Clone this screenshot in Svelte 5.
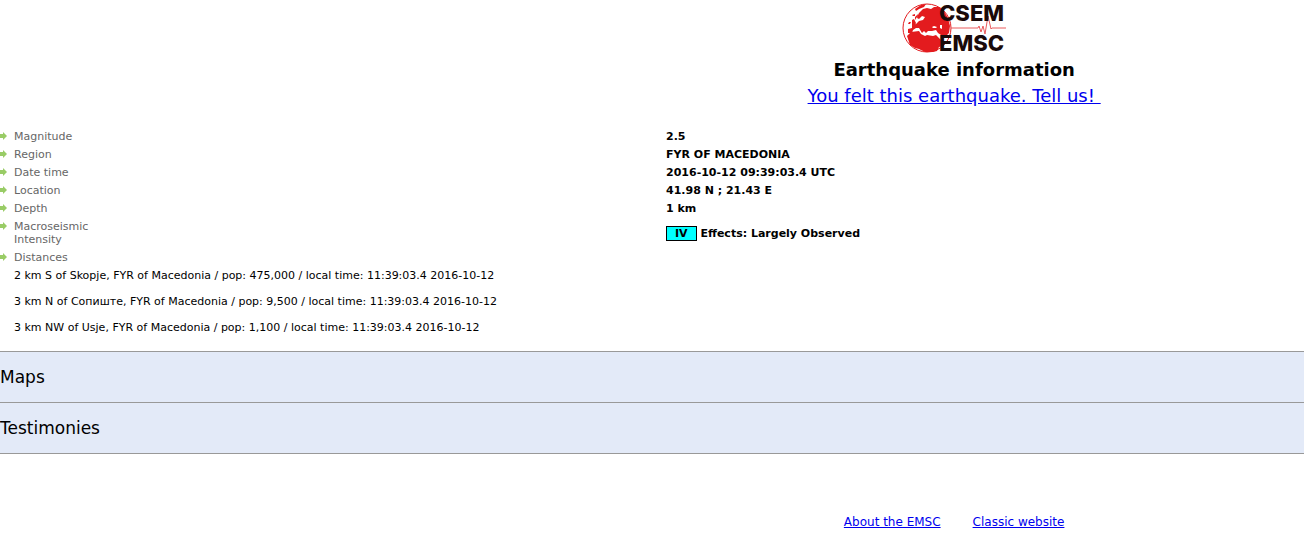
<script lang="ts">
  const details = [
    { label: 'Magnitude', value: '2.5' },
    { label: 'Region', value: 'FYR OF MACEDONIA' },
    { label: 'Date time', value: '2016-10-12 09:39:03.4 UTC' },
    { label: 'Location', value: '41.98 N ; 21.43 E' },
    { label: 'Depth', value: '1 km' },
    { label: 'Macroseismic Intensity', intensity: 'IV', value: 'Effects: Largely Observed' },
  ];

  const distances = [
    '2 km S of Skopje, FYR of Macedonia / pop: 475,000 / local time: 11:39:03.4 2016-10-12',
    '3 km N of Сопиште, FYR of Macedonia / pop: 9,500 / local time: 11:39:03.4 2016-10-12',
    '3 km NW of Usje, FYR of Macedonia / pop: 1,100 / local time: 11:39:03.4 2016-10-12',
  ];

  const sections = ['Maps', 'Testimonies'];
</script>

{#snippet label(text: string)}
  <span class="label">
    <svg class="arrow" viewBox="0 0 7 8" width="7" height="8" aria-hidden="true">
      <path d="M0 2h3V0l4 4-4 4V6H0z" />
    </svg>
    <span class="label-text">{text}</span>
  </span>
{/snippet}

<header class="centered">
  <div class="inner">
    <svg class="logo" viewBox="0 0 106 56" width="106" height="56" role="img" aria-label="CSEM EMSC">
      <circle cx="26" cy="28" r="24" fill="#fff" stroke="#e31b1e" />
      <g fill="#e31b1e">
        <!-- Greenland, Iceland -->
        <path d="M14 9l6-4 5-1-2 3-5 2-3 2zM11 15l3-1 0 2-2 0z" />
        <!-- British Isles -->
        <path d="M11 20l2-1 2 4-1 2-3 0zM8 22l2 0-1 2-2 0z" />
        <!-- Europe and Asia -->
        <path d="M16 17l2-4 4-4 4-1 4 1 3-2 5 0 5 4 4 7 2 8-1 7-3 3-5-1-3-2-2-3-4 1-4 0-2 2-2-2-2 2-3-5-3 0-3 2-1 3-4 0 0-4 4-1 0-3 4-1 3-3 4-1 2-3-3-1-3 3-2-1 1-4-3 3 0 3z" />
        <!-- Africa and Arabia -->
        <path d="M6 36l4-4 8-1 2 3 4 2 2-1 6 1 3-1 5 5 4 3-2 3-4 1-2 4-4 1-8 0-6-3-4-1-5-3z" />
      </g>
      <path d="M31 27l2-1 3 1-1 1-3 0zM39 25l2 0 0 4-2-1z" fill="#fff" />
      <path
        d="M50 28h27l1-2 2 6 2-6 2 8 3-18 3 13 1-1h14"
        fill="none"
        stroke="#ea5a5c"
      />
      <text x="38" y="21">CSEM</text>
      <text x="38" y="51">EMSC</text>
    </svg>
    <h1>Earthquake information</h1>
    <a class="felt" href="#testify">You felt this earthquake. Tell us!&nbsp;</a>
  </div>
</header>

<main>
  <table>
    <tbody>
      {#each details as row}
        <tr>
          <th scope="row">{@render label(row.label)}</th>
          <td>
            {#if row.intensity}<span class="intensity">{row.intensity}</span>{/if}
            {row.value}
          </td>
        </tr>
      {/each}
      <tr>
        <th scope="row">{@render label('Distances')}</th>
        <td></td>
      </tr>
    </tbody>
  </table>

  <ul class="distances">
    {#each distances as distance}
      <li>{distance}</li>
    {/each}
  </ul>

  <div class="sections">
    {#each sections as section}
      <button type="button">{section}</button>
    {/each}
  </div>
</main>

<footer class="centered">
  <nav class="inner">
    <a href="#about">About the EMSC</a>
    <a href="#classic">Classic website</a>
  </nav>
</footer>

<style>
  :global(body) {
    background: #fff;
    color: #000;
    font-family: Verdana, 'DejaVu Sans', sans-serif;
    font-size: 11px;
    line-height: 13px;
  }

  a {
    color: #00e;
  }

  .centered {
    display: grid;
    grid-template-columns: 19fr 22fr;
  }

  .inner {
    grid-column: 2;
  }

  header .inner {
    display: flex;
    flex-direction: column;
    align-items: center;
  }

  .logo {
    overflow: visible;
  }

  .logo text {
    font-family: Inter, sans-serif;
    font-size: 22px;
    font-weight: 800;
    fill: #1a0a0a;
  }

  h1 {
    margin: 3px 0;
    font-size: 18px;
    line-height: 22px;
  }

  .felt {
    font-size: 18px;
    line-height: 24px;
  }

  table {
    width: 100%;
    margin-top: 20px;
    border-collapse: collapse;
  }

  th,
  td {
    padding: 2px 0 3px;
    text-align: left;
  }

  th {
    width: 51%;
    color: #666;
    font-weight: normal;
  }

  td {
    padding-left: 1px;
    font-weight: bold;
  }

  .label {
    display: flex;
    gap: 7px;
  }

  .label-text {
    width: 80px;
  }

  .arrow {
    margin-top: 2px;
    fill: #9c6;
  }

  .intensity {
    display: inline-block;
    padding: 0 8px;
    border: 1px solid #000;
    background: #0ff;
  }

  .distances {
    display: grid;
    gap: 13px;
    margin: 2px 0 17px;
    padding: 0 0 0 14px;
    list-style: none;
  }

  .sections {
    border-top: 1px solid #999;
  }

  button {
    display: block;
    width: 100%;
    padding: 14px 0;
    border: 0;
    border-bottom: 1px solid #999;
    background: #e3eaf8;
    color: inherit;
    font-family: inherit;
    font-size: 17px;
    line-height: 22px;
    text-align: left;
  }

  nav {
    display: flex;
    justify-content: center;
    gap: 32px;
    padding: 60px 0 20px;
    font-size: 12px;
    line-height: 16px;
  }
</style>
